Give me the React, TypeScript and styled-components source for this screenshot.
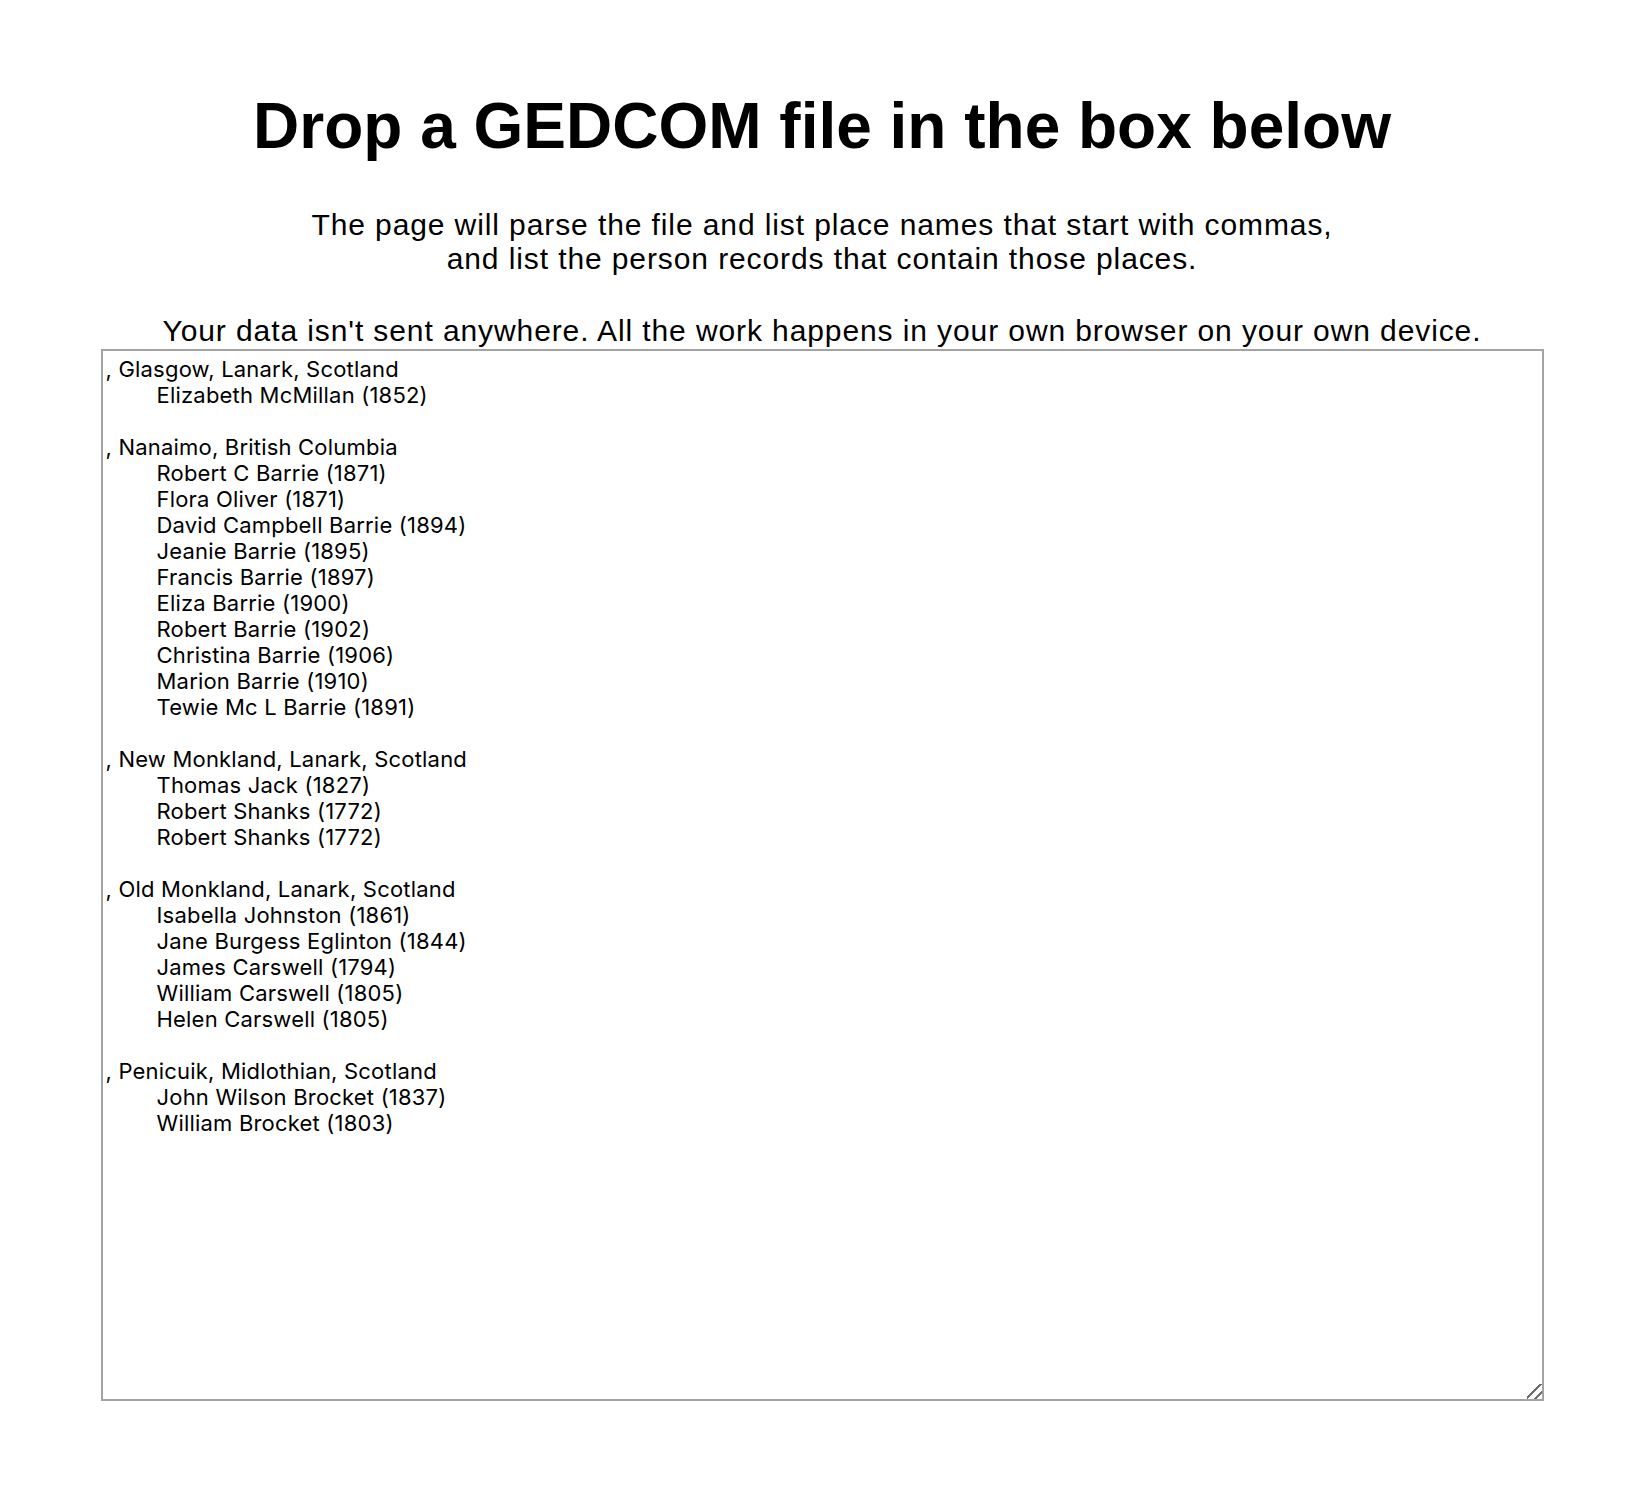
import React from "react";
import styled, { createGlobalStyle } from "styled-components";

const GlobalStyle = createGlobalStyle`
  html, body {
    margin: 0;
    padding: 0;
    background: #ffffff;
  }
  body {
    font-family: "Liberation Sans", Arial, Helvetica, sans-serif;
    color: #000000;
  }
`;

const Page = styled.main`
  display: flex;
  flex-direction: column;
  align-items: center;
  padding-top: 90px;
  padding-bottom: 100px;
`;

const Title = styled.h1`
  margin: 0 0 44px 0;
  font-family: "Liberation Sans", Arial, Helvetica, sans-serif;
  font-weight: 700;
  font-size: 64px;
  line-height: 73.6px;
  text-align: center;
`;

const Intro = styled.p<{ $gapAfter: number }>`
  margin: 0 0 ${(p) => p.$gapAfter}px 0;
  font-size: 30px;
  letter-spacing: 0.9px;
  line-height: 34px;
  text-align: center;
`;

const Output = styled.textarea`
  box-sizing: border-box;
  display: block;
  width: 1443px;
  height: 1052px;
  margin: 0;
  padding: 5px 3px 2px 3px;
  border: 2px solid #a3a3a3;
  border-radius: 0;
  background: #ffffff;
  color: #000000;
  font-family: Inter, "Noto Sans", sans-serif;
  font-size: 22px;
  letter-spacing: 0.2px;
  line-height: 26px;
  tab-size: 51px;
  -moz-tab-size: 51px;
  white-space: pre;
  resize: both;
  outline: none;

  &::-webkit-resizer {
    background: linear-gradient(
      135deg,
      transparent 0 42%,
      #6e6e6e 42% 52%,
      transparent 52% 71%,
      #6e6e6e 71% 81%,
      transparent 81%
    );
  }
`;

type Place = { name: string; people: string[] };

const places: Place[] = [
  { name: ", Glasgow, Lanark, Scotland", people: ["Elizabeth McMillan (1852)"] },
  {
    name: ", Nanaimo, British Columbia",
    people: [
      "Robert C Barrie (1871)",
      "Flora Oliver (1871)",
      "David Campbell Barrie (1894)",
      "Jeanie Barrie (1895)",
      "Francis Barrie (1897)",
      "Eliza Barrie (1900)",
      "Robert Barrie (1902)",
      "Christina Barrie (1906)",
      "Marion Barrie (1910)",
      "Tewie Mc L Barrie (1891)",
    ],
  },
  {
    name: ", New Monkland, Lanark, Scotland",
    people: ["Thomas Jack (1827)", "Robert Shanks (1772)", "Robert Shanks (1772)"],
  },
  {
    name: ", Old Monkland, Lanark, Scotland",
    people: [
      "Isabella Johnston (1861)",
      "Jane Burgess Eglinton (1844)",
      "James Carswell (1794)",
      "William Carswell (1805)",
      "Helen Carswell (1805)",
    ],
  },
  {
    name: ", Penicuik, Midlothian, Scotland",
    people: ["John Wilson Brocket (1837)", "William Brocket (1803)"],
  },
];

const report = places
  .map((p) => [p.name, ...p.people.map((n) => "\t" + n)].join("\n"))
  .join("\n\n");

export default function App() {
  return (
    <>
      <GlobalStyle />
      <Page>
        <Title>Drop a GEDCOM file in the box below</Title>
        <Intro $gapAfter={38}>
          The page will parse the file and list place names that start with commas,
          <br />
          and list the person records that contain those places.
        </Intro>
        <Intro $gapAfter={1}>
          Your data isn't sent anywhere. All the work happens in your own browser on your own device.
        </Intro>
        <Output readOnly spellCheck={false} value={report} />
      </Page>
    </>
  );
}
